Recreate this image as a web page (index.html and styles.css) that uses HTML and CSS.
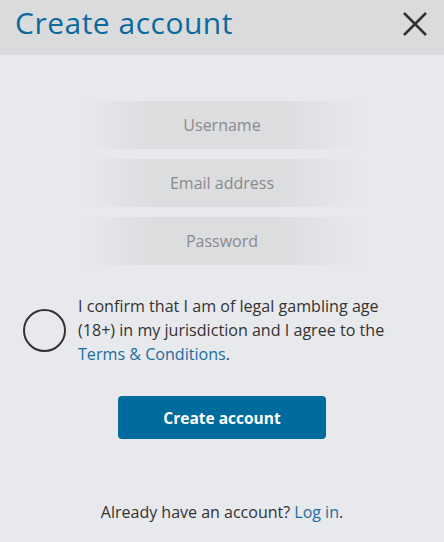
FILE: index.html
```html
<!DOCTYPE html>
<html>
<head>
<meta charset="utf-8">
<link rel="stylesheet" href="styles.css">
</head>
<body>
<div class="modal">
  <header class="header">
    <h1 class="title">Create account</h1>
    <button class="close" aria-label="Close">
      <svg width="26" height="26" viewBox="0 0 26 26"><path d="M2 2 L24 24 M24 2 L2 24" stroke="#333" stroke-width="2.6" fill="none"/></svg>
    </button>
  </header>
  <main class="content">
    <div class="fields">
      <input class="field" type="text" placeholder="Username">
      <input class="field" type="email" placeholder="Email address">
      <input class="field" type="password" placeholder="Password">
    </div>
    <label class="confirm">
      <span class="radio"></span>
      <span class="confirm-text">I confirm that I am of legal gambling age (18+) in my jurisdiction and I agree to the <a class="link" href="#">Terms &amp; Conditions</a>.</span>
    </label>
    <button class="submit">Create account</button>
    <p class="login">Already have an account? <a class="link" href="#">Log in</a>.</p>
  </main>
</div>
</body>
</html>
```
FILE: styles.css
```css
html, body {
  margin: 0;
  padding: 0;
  background: #e8e9ec;
  font-family: "Open Sans", "Noto Sans", sans-serif;
}
.modal {
  width: 444px;
  height: 542px;
  display: flex;
  flex-direction: column;
}
.header {
  height: 55px;
  background: #dadbdd;
  display: flex;
  align-items: center;
  justify-content: space-between;
  padding: 0 15px;
  box-sizing: border-box;
}
.title {
  margin: 0;
  font-size: 30px;
  letter-spacing: 0.5px;
  font-weight: 400;
  color: #0a6a9c;
  line-height: 1;
  margin-top: -9px;
}
.close {
  border: 0;
  background: none;
  padding: 0;
  width: 26px;
  height: 26px;
  margin-top: -8px;
  margin-right: 1px;
  cursor: pointer;
}
.close svg { display: block; }
.content {
  display: flex;
  flex-direction: column;
  align-items: center;
  padding-top: 46px;
}
.fields {
  display: flex;
  flex-direction: column;
  gap: 10px;
}
.field {
  width: 280px;
  height: 48px;
  box-sizing: border-box;
  border: 0;
  outline: none;
  background: linear-gradient(to right, rgba(220,221,223,0) 0%, #dcdddf 25%, #dcdddf 70%, rgba(220,221,223,0) 100%);
  font-family: inherit;
  font-size: 16px;
  text-align: center;
  color: #333;
}
.field::placeholder {
  color: #8a8a8e;
  opacity: 1;
}
.confirm {
  display: flex;
  align-items: center;
  gap: 12px;
  width: 100%;
  box-sizing: border-box;
  padding: 0 40px 0 23px;
  margin-top: 29px;
}
.radio {
  flex: none;
  width: 43px;
  height: 43px;
  box-sizing: border-box;
  border: 2px solid #333;
  border-radius: 50%;
}
.confirm-text {
  font-size: 16.1px;
  line-height: 24px;
  color: #333;
}
.link {
  color: #1a6ea0;
  text-decoration: none;
}
.submit {
  margin-top: 30px;
  width: 208px;
  height: 43px;
  border: 0;
  border-radius: 4px;
  background: #006b9d;
  color: #fff;
  font-family: inherit;
  font-size: 15.5px;
  font-weight: 700;
  cursor: pointer;
}
.login {
  margin: 61px 0 0;
  font-size: 16px;
  line-height: 24px;
  color: #333;
}
```
